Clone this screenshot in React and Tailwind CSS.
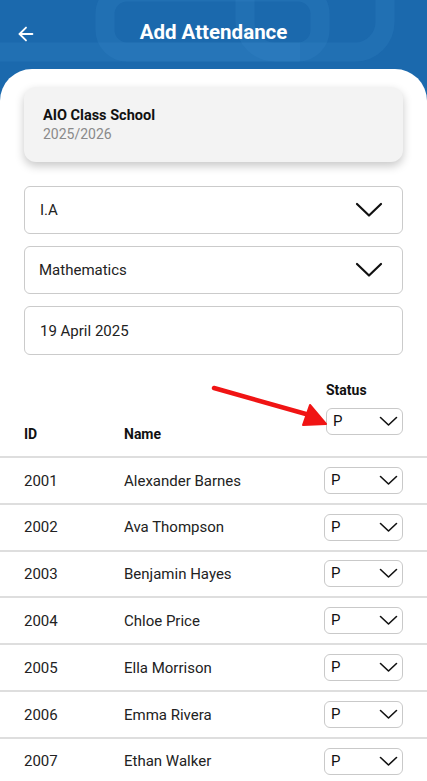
import React from "react";

const font = { fontFamily: "Roboto, 'Noto Sans', sans-serif" };

function BigChevron() {
  return (
    <svg width="28" height="16" viewBox="0 0 28 16" fill="none">
      <path d="M2 2 L14 13.5 L26 2" stroke="#111" strokeWidth="2.2" strokeLinecap="round" strokeLinejoin="round" />
    </svg>
  );
}

function SmallChevron() {
  return (
    <svg width="19" height="11" viewBox="0 0 19 11" fill="none">
      <path d="M1.5 1.5 L9.5 9 L17.5 1.5" stroke="#111" strokeWidth="1.6" strokeLinecap="round" strokeLinejoin="round" />
    </svg>
  );
}

function StatusSelect({ w = "w-[79px]" }) {
  return (
    <div className={`${w} h-[27px] border border-[#c9c9c9] rounded-[6px] flex items-center justify-between pl-[6px] pr-[4px] bg-white`}>
      <span className="text-[15px] text-[#111] leading-none">P</span>
      <SmallChevron />
    </div>
  );
}

const rows = [
  ["2001", "Alexander Barnes"],
  ["2002", "Ava Thompson"],
  ["2003", "Benjamin Hayes"],
  ["2004", "Chloe Price"],
  ["2005", "Ella Morrison"],
  ["2006", "Emma Rivera"],
  ["2007", "Ethan Walker"],
];

export default function App() {
  return (
    <div className="w-[427px] h-[781px] overflow-hidden bg-[#1b69ad] relative" style={font}>
      <svg className="absolute left-0 top-0" width="427" height="75" viewBox="0 0 427 75" fill="none">
        <g stroke="#3c8ccb" strokeOpacity="0.2" strokeWidth="19">
          <path d="M-10 52 H 300" />
          <rect x="105" y="-8" width="215" height="60" rx="22" />
          <rect x="245" y="-40" width="140" height="92" rx="30" />
        </g>
      </svg>
      <div className="relative h-[69px] flex items-center justify-center">
        <svg className="absolute left-[15px] top-[23px]" width="22" height="22" viewBox="0 0 24 24" fill="none" stroke="white" strokeWidth="2" strokeLinecap="round" strokeLinejoin="round">
          <path d="M19 12H5" />
          <path d="M12 19l-7-7 7-7" />
        </svg>
        <h1 className="text-white text-[20.5px] font-bold -mt-[4px]">Add Attendance</h1>
      </div>
      <div className="relative bg-white rounded-t-[32px] h-[712px]">
        <div className="px-6 pt-[18px]">
          <div className="h-[75px] rounded-[12px] bg-[#f3f3f3] shadow-[0_4px_10px_rgba(0,0,0,0.22)] pl-[19px] flex flex-col justify-center">
            <div className="text-[14.5px] font-bold text-[#111] leading-[19px]">AIO Class School</div>
            <div className="text-[14px] text-[#8a8a8a] leading-[19px]">2025/2026</div>
          </div>
          <div className="mt-[24px] h-[48px] rounded-[6px] border border-[#cbcbcb] flex items-center justify-between pl-[15px] pr-[19px]">
            <span className="text-[15px] text-[#222] mt-[1px]">I.A</span>
            <BigChevron />
          </div>
          <div className="mt-[12px] h-[48px] rounded-[6px] border border-[#cbcbcb] flex items-center justify-between pl-[14px] pr-[19px]">
            <span className="text-[15px] text-[#222] mt-[1px]">Mathematics</span>
            <BigChevron />
          </div>
          <div className="mt-[12px] h-[49px] rounded-[6px] border border-[#cbcbcb] flex items-center pl-[15px]">
            <span className="text-[15px] text-[#222] mt-[1px]">19 April 2025</span>
          </div>
        </div>

        <div className="relative mt-[27px] flex items-end px-6 border-b-2 border-[#dedede]">
          <div className="w-[100px] pb-[12px] text-[14px] font-bold text-[#111] leading-[20px]">ID</div>
          <div className="flex-1 pb-[12px] text-[14px] font-bold text-[#111] leading-[20px]">Name</div>
          <div className="w-[79px] pb-[21px] flex flex-col items-end">
            <div className="w-[77px] text-[14px] font-bold text-[#111] leading-[17px]">Status</div>
            <div className="mt-[9px]">
              <StatusSelect w="w-[77px]" />
            </div>
          </div>
          <svg className="absolute left-[205px] top-[0px]" width="130" height="50" viewBox="0 0 130 50" fill="none">
            <path d="M9 6 L108 34" stroke="#f01414" strokeWidth="4.5" strokeLinecap="round" />
            <path d="M121 42 L98 43 L105 23 Z" fill="#f01414" stroke="#f01414" strokeWidth="2" strokeLinejoin="round" />
          </svg>
        </div>

        {rows.map(([id, name]) => (
          <div key={id} className="h-[46.8px] flex items-center px-6 border-b-2 border-[#dedede] box-border">
            <div className="w-[100px] text-[15px] text-[#222] mt-[1px]">{id}</div>
            <div className="flex-1 text-[15px] text-[#222] mt-[1px]">{name}</div>
            <StatusSelect />
          </div>
        ))}
      </div>
    </div>
  );
}
